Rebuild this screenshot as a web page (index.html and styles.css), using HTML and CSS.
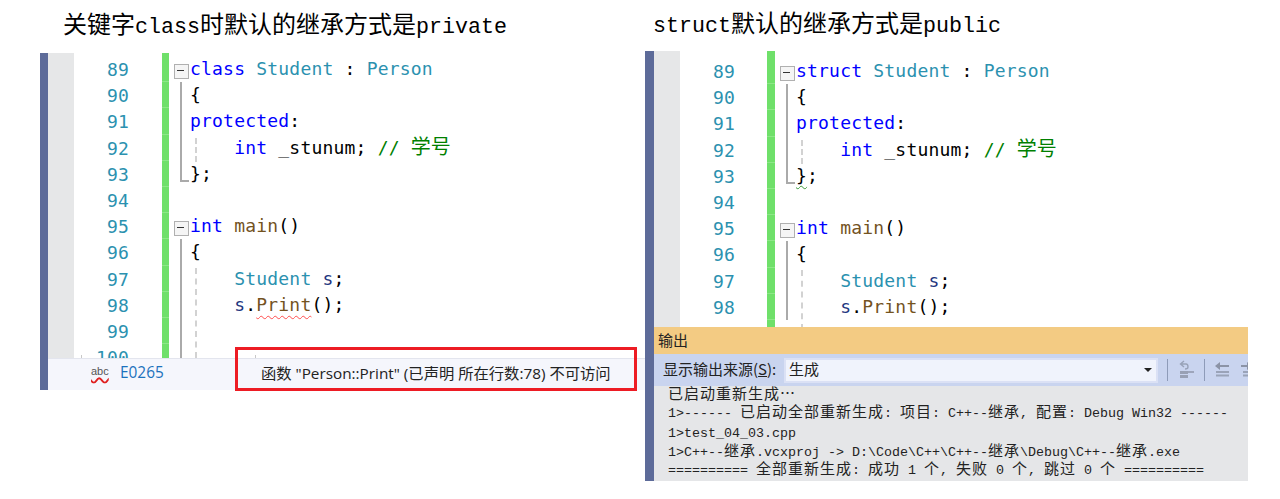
FILE: index.html
```html
<!DOCTYPE html>
<html lang="zh">
<head>
<meta charset="utf-8">
<title>class 与 struct 默认继承方式</title>
<link rel="stylesheet" href="styles.css">
</head>
<body>
<main class="page">
  <section class="pane pane-left">
    <h2 class="title"><span>关键字</span><span class="lat">class</span><span>时默认的继承方式是</span><span class="lat">private</span></h2>
    <div class="window">
      <div class="rail"></div>
      <div class="body">
        <div class="editor">
          <div class="gutter"></div>
          <div class="nums">
            <div>89</div><div>90</div><div>91</div><div>92</div><div>93</div><div>94</div><div>95</div><div>96</div><div>97</div><div>98</div><div>99</div><div>100</div>
          </div>
          <div class="change"></div>
          <div class="code">
            <i class="guide g1"></i><i class="guide g2"></i>
            <div class="line"><b class="fold box"></b><span class="tx"><span class="kw">class</span> <span class="ty">Student</span> : <span class="ty">Person</span></span></div>
            <div class="line"><b class="fold bar"></b><span class="tx">{</span></div>
            <div class="line"><b class="fold bar"></b><span class="tx"><span class="kw">protected</span>:</span></div>
            <div class="line"><b class="fold bar"></b><span class="tx">    <span class="kw">int</span> _stunum; <span class="cm">// <span class="cn">学号</span></span></span></div>
            <div class="line"><b class="fold end"></b><span class="tx">};</span></div>
            <div class="line"><b class="fold"></b></div>
            <div class="line"><b class="fold box"></b><span class="tx"><span class="kw">int</span> <span class="fn">main</span>()</span></div>
            <div class="line"><b class="fold bar"></b><span class="tx">{</span></div>
            <div class="line"><b class="fold bar"></b><span class="tx">    <span class="ty">Student</span> <span class="va">s</span>;</span></div>
            <div class="line"><b class="fold bar"></b><span class="tx">    <span class="va">s</span>.<span class="fn err">Print</span>();</span></div>
            <div class="line"><b class="fold bar"></b></div>
            <div class="line"><b class="fold bar"></b></div>
          </div>
        </div>
        <div class="status">
          <i class="tick tick-a"></i><i class="tick tick-b"></i>
          <span class="abc">abc</span>
          <span class="ecode">E0265</span>
          <span class="emsg">函数 "Person::Print" (已声明 所在行数:78) 不可访问</span>
        </div>
      </div>
      <div class="redbox"></div>
    </div>
  </section>

  <section class="pane pane-right">
    <h2 class="title"><span class="lat">struct</span><span>默认的继承方式是</span><span class="lat">public</span></h2>
    <div class="window">
      <div class="rail"></div>
      <div class="body">
        <div class="editor">
          <div class="gutter"></div>
          <div class="nums">
            <div>89</div><div>90</div><div>91</div><div>92</div><div>93</div><div>94</div><div>95</div><div>96</div><div>97</div><div>98</div>
          </div>
          <div class="change"></div>
          <div class="code">
            <i class="guide g1"></i><i class="guide g2"></i>
            <div class="line"><b class="fold box"></b><span class="tx"><span class="kw">struct</span> <span class="ty">Student</span> : <span class="ty">Person</span></span></div>
            <div class="line"><b class="fold bar"></b><span class="tx">{</span></div>
            <div class="line"><b class="fold bar"></b><span class="tx"><span class="kw">protected</span>:</span></div>
            <div class="line"><b class="fold bar"></b><span class="tx">    <span class="kw">int</span> _stunum; <span class="cm">// <span class="cn">学号</span></span></span></div>
            <div class="line"><b class="fold end"></b><span class="tx"><span class="warn">}</span>;</span></div>
            <div class="line"><b class="fold"></b></div>
            <div class="line"><b class="fold box"></b><span class="tx"><span class="kw">int</span> <span class="fn">main</span>()</span></div>
            <div class="line"><b class="fold bar"></b><span class="tx">{</span></div>
            <div class="line"><b class="fold bar"></b><span class="tx">    <span class="ty">Student</span> <span class="va">s</span>;</span></div>
            <div class="line"><b class="fold bar"></b><span class="tx">    <span class="va">s</span>.<span class="fn">Print</span>();</span></div>
          </div>
        </div>
        <div class="out-head">输出</div>
        <div class="out-bar">
          <label class="out-label">显示输出来源(<u>S</u>):</label>
          <div class="select"><span class="select-text">生成</span><i class="caret"></i></div>
          <i class="sep"></i>
          <svg class="tool" width="18" height="20" viewBox="0 0 18 20"><path d="M7 1 L3.5 4 L7 7 M4 4 H9 Q11 4 11 7 Q11 9 8 9" fill="none" stroke="#98a2b8" stroke-width="1.4"/><path d="M3 11 H11 V14 H3 Z M3 15 H11 V18 H3 Z" fill="#98a0b4"/><path d="M11 12 H17" stroke="#8e96aa" stroke-width="1.5"/></svg>
          <i class="sep"></i>
          <svg class="tool" width="16" height="20" viewBox="0 0 16 20"><path d="M6 2 L1 6 L6 10 Z" fill="#8b93a6"/><path d="M6 6 H15" stroke="#8b93a6" stroke-width="2"/><path d="M2 12 H15 M2 15.5 H15" stroke="#9aa3b8" stroke-width="2"/></svg>
          <svg class="tool tool-last" width="16" height="20" viewBox="0 0 16 20"><path d="M6 2 L11 6 L6 10 Z" fill="#8b93a6"/><path d="M0 6 H6" stroke="#8b93a6" stroke-width="2"/><path d="M2 12 H15 M2 15.5 H15" stroke="#9aa3b8" stroke-width="2"/></svg>
        </div>
        <div class="out-text">
          <div class="o1"><span class="z">已启动重新生成⋯</span></div>
          <div class="o2">1&gt;------ <span class="z">已启动全部重新生成</span>: <span class="z">项目</span>: C++--<span class="z">继承</span>, <span class="z">配置</span>: Debug Win32 ------</div>
          <div class="o3">1&gt;test_04_03.cpp</div>
          <div class="o4">1&gt;C++--<span class="z">继承</span>.vcxproj -&gt; D:\Code\C++\C++--<span class="z">继承</span>\Debug\C++--<span class="z">继承</span>.exe</div>
          <div class="o5">========== <span class="z">全部重新生成</span>: <span class="z">成功</span> 1 <span class="z">个</span>, <span class="z">失败</span> 0 <span class="z">个</span>, <span class="z">跳过</span> 0 <span class="z">个</span> ==========</div>
        </div>
      </div>
    </div>
  </section>
</main>
</body>
</html>
```
FILE: styles.css
```css
* { box-sizing: border-box; }
html, body { margin: 0; padding: 0; background: #fff; }
body { font-family: "Noto Sans CJK SC", sans-serif; overflow: hidden; }

.page { display: flex; width: 1280px; height: 499px; }
.pane { display: flex; flex-direction: column; }
.pane-left { width: 645px; padding-left: 40px; }
.pane-right { width: 603px; }

.title {
  margin: 0;
  font-weight: 400;
  font-size: 24px;
  line-height: 30px;
  color: #000;
  white-space: nowrap;
  font-family: "Noto Sans CJK SC", sans-serif;
}
.pane-left .title { height: 53px; padding: 8px 0 0 23px; }
.pane-right .title { height: 51px; padding: 7px 0 0 8px; }
.lat { font-family: "Liberation Mono", monospace; font-size: 21.67px; }

.window { position: relative; display: flex; }
.rail { background: #5d6b99; }
.pane-left .rail { width: 8px; }
.pane-right .rail { width: 9px; }
.body { display: flex; flex-direction: column; flex: 1; min-width: 0; }

.editor {
  display: flex;
  overflow: hidden;
  background: #fff;
  font-family: "DejaVu Sans Mono", monospace;
  font-size: 18px;
  letter-spacing: .2px;
  line-height: 26.2px;
}
.pane-left .editor { height: 305px; }
.pane-right .editor { height: 276px; }
.gutter { width: 26px; background: #e6e7e8; flex: none; }
.nums { width: 55px; flex: none; text-align: right; color: #2b91af; margin-right: 33px; position: relative; top: 1px; }
.change {
  width: 7px;
  flex: none;
  background: repeating-linear-gradient(to bottom, #6fe06a 0, #6fe06a 25.2px, #8ce787 25.2px, #8ce787 26.2px);
  background-position: 0 3px;
}
.pane-right .change { width: 8px; background-position: 0 7px; }
.pane-right .nums { margin-right: 32px; }
.pane-left .nums, .pane-left .code { padding-top: 3px; }
.pane-right .nums, .pane-right .code { padding-top: 7px; }

.code { position: relative; flex: 1; padding-left: 5px; color: #000; }
.line { display: flex; height: 26.2px; }
.tx { white-space: pre; }
.fold { position: relative; flex: none; display: block; width: 17px; height: 100%; margin-right: -1px; }
.fold.box::before {
  content: ""; position: absolute; left: 0; top: 8px; width: 13px; height: 13px;
  border: 1px solid #b0b0b0; background: #f5f5f5;
}
.fold.box::after {
  content: ""; position: absolute; left: 3px; top: 14px; width: 7px; height: 1px; background: #333;
}
.fold.bar::before {
  content: ""; position: absolute; left: 6px; top: 0; bottom: 0; width: 2px; background: #aaa;
}
.fold.end::before {
  content: ""; position: absolute; left: 6px; top: 0; height: 19px; width: 7px;
  border-left: 2px solid #aaa; border-bottom: 2px solid #aaa;
}
.guide { position: absolute; left: 26px; width: 0; border-left: 2px dashed #d2d2d2; }
.pane-left .g1 { top: 85px; height: 24px; }
.pane-left .g2 { top: 215px; height: 90px; }
.pane-right .g1 { top: 89px; height: 24px; }
.pane-right .g2 { top: 219px; height: 60px; }

.kw { color: #0000ff; }
.ty { color: #2b91af; }
.fn { color: #74531f; }
.va { color: #1f377f; }
.cm { color: #008000; }
.cn { font-family: "Noto Sans CJK SC", sans-serif; font-size: 20px; line-height: 20px; letter-spacing: 0; }
.err {
  text-decoration: underline wavy #ff4d4d 1px;
  text-underline-offset: 4px;
}
.warn {
  text-decoration: underline wavy #3a9a3a 1px;
  text-underline-offset: 3px;
}

.status {
  position: relative;
  display: flex;
  align-items: center;
  height: 32px;
  padding-bottom: 4px;
  background: #f5f6fc;
  border-top: 1px solid #e3e5ee;
  font-size: 14.5px;
  line-height: 20px;
  color: #222;
  white-space: nowrap;
}
.tick { position: absolute; top: -4px; width: 1px; height: 3px; background: #c8c8c8; }
.tick-a { left: 33px; }
.tick-b { left: 207px; }
.abc {
  width: 17px;
  margin-left: 43px;
  font-family: "Liberation Sans", sans-serif;
  font-size: 11px;
  line-height: 11px;
  color: #555;
  text-align: center;
  padding-bottom: 3px;
  text-decoration: underline wavy #e02020 1.5px;
  text-underline-offset: 2px;
}
.ecode { margin-left: 12px; width: 141px; color: #1c72bd; font-family: "Open Sans", sans-serif; font-size: 15.4px; }
.emsg { font-family: "Open Sans", "Noto Sans CJK SC", sans-serif; font-size: 15.3px; }

.redbox {
  position: absolute;
  left: 195px; top: 294px;
  width: 402px; height: 44px;
  border: 3px solid #ed1c24;
}

.out-head {
  height: 27px;
  padding-left: 4px;
  background: #f3cb83;
  font-size: 15px;
  line-height: 26px;
  color: #222;
}
.out-bar {
  display: flex;
  align-items: center;
  height: 32px;
  padding: 0 0 0 9px;
  background: #c9d4ef;
  overflow: hidden;
  color: #222;
}
.out-label { width: 121px; font-size: 15px; line-height: 20px; padding-bottom: 2px; white-space: nowrap; flex: none; }
.select {
  display: flex;
  align-items: center;
  justify-content: space-between;
  width: 374px;
  height: 25px;
  flex: none;
  padding: 0 4px 0 3px;
  background: #f0f3fc;
  border: 2px solid #dbe1f5;
  font-size: 15px;
  line-height: 20px;
}
.select-text { padding-bottom: 2px; }
.caret { width: 0; height: 0; border: 4px solid transparent; border-top: 4px solid #222; border-bottom: 0; }
.sep { width: 1px; height: 22px; flex: none; background: #8e9bb8; margin: 0 9px; }
.tool { flex: none; }
.tool-last { margin-left: 11px; }

.out-text {
  height: 95px;
  padding: 0 0 0 14px;
  background: #e5e6e8;
  font-family: "Liberation Mono", monospace;
  font-size: 13.33px;
  color: #222;
  overflow: hidden;
}
.out-text > div { height: 19px; line-height: 19px; white-space: pre; }
.out-text > .o1 { height: 18px; }
.out-text > .o2 { height: 20px; }
.out-text > .o4 { height: 18px; }
.z { font-family: "Noto Sans CJK SC", sans-serif; font-size: 15px; line-height: 0; letter-spacing: 1px; }
```
